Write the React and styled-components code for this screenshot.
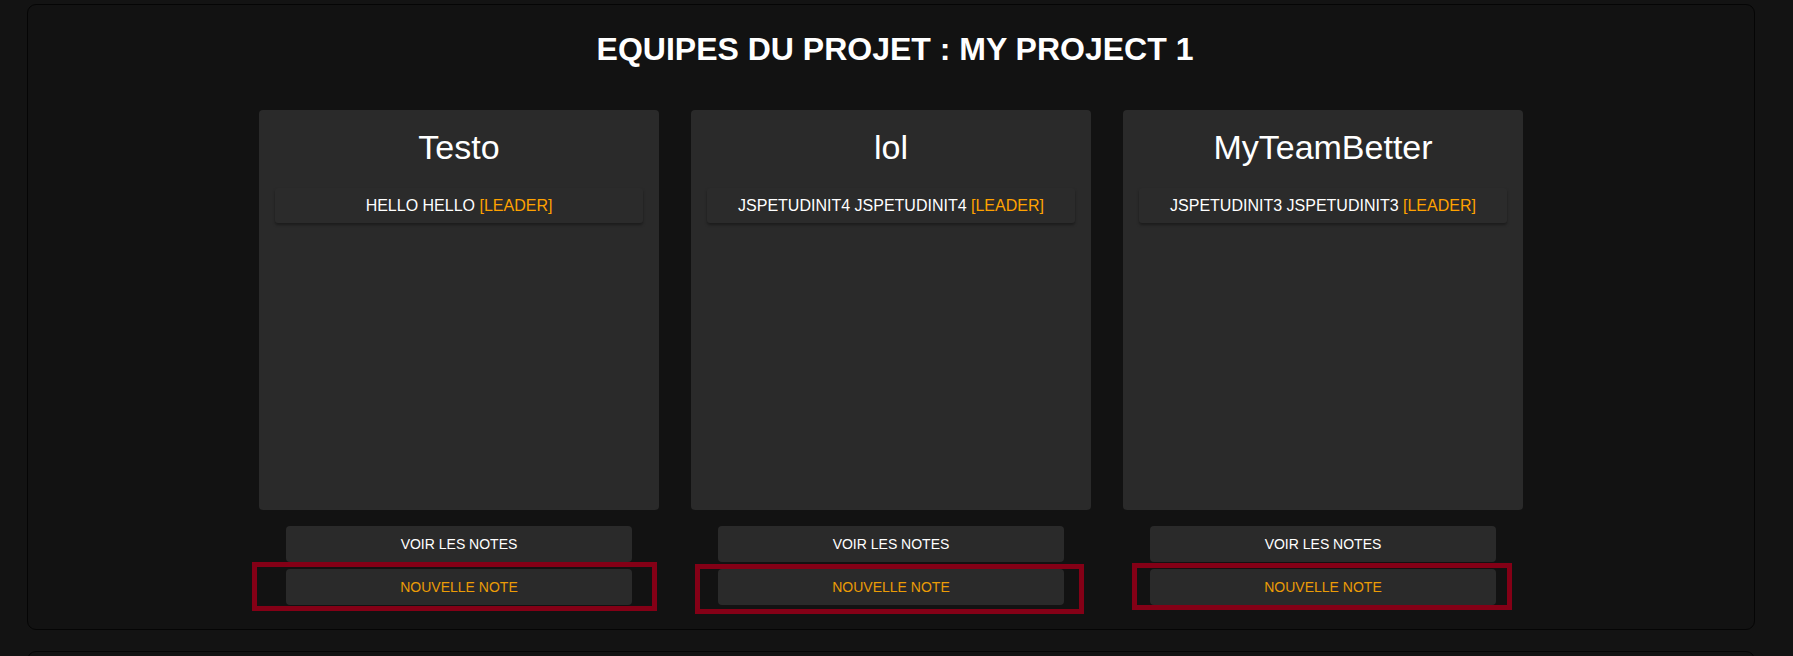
import React from 'react'
import styled, { createGlobalStyle } from 'styled-components'

const GlobalStyle = createGlobalStyle`
    html, body {
        margin: 0;
        padding: 0;
        background-color: #131313;
        font-family: 'Liberation Sans', Arial, sans-serif;
        overflow: hidden;
    }
`

const teams = [
    {
        name: 'Testo',
        members: [{ name: 'HELLO HELLO', leader: true }],
        frame: { top: 7, right: 25, bottom: 6, left: 34 },
    },
    {
        name: 'lol',
        members: [{ name: 'JSPETUDINIT4 JSPETUDINIT4', leader: true }],
        frame: { top: 5, right: 20, bottom: 9, left: 23 },
    },
    {
        name: 'MyTeamBetter',
        members: [{ name: 'JSPETUDINIT3 JSPETUDINIT3', leader: true }],
        frame: { top: 6, right: 16, bottom: 5, left: 18 },
    },
]

const App = () => {
    return (
        <>
            <GlobalStyle />
            <Page>
                <Panel>
                    <Title>EQUIPES DU PROJET : MY PROJECT 1</Title>
                    <TeamsRow>
                        {teams.map((team) => (
                            <TeamColumn key={team.name}>
                                <TeamCard>
                                    <TeamName>{team.name}</TeamName>
                                    {team.members.map((member) => (
                                        <Member key={member.name}>
                                            {member.name}
                                            {member.leader && <Leader> [LEADER]</Leader>}
                                        </Member>
                                    ))}
                                </TeamCard>
                                <Actions>
                                    <ActionBtn>VOIR LES NOTES</ActionBtn>
                                    <Highlighted>
                                        <ActionBtn $accent>NOUVELLE NOTE</ActionBtn>
                                        <Frame {...team.frame} />
                                    </Highlighted>
                                </Actions>
                            </TeamColumn>
                        ))}
                    </TeamsRow>
                </Panel>
                <NextPanel />
            </Page>
        </>
    )
}

export default App

const Page = styled.div`
    padding: 4px 38px 0 27px;
    display: flex;
    flex-direction: column;
    gap: 21px;
`

const Panel = styled.section`
    background-color: #121212;
    border: 1px solid #050505;
    border-radius: 9px;
    padding: 26px 0 24px;
    display: flex;
    flex-direction: column;
    align-items: center;
`

const NextPanel = styled(Panel)`
    height: 300px;
    padding: 0;
`

const Title = styled.h1`
    margin: 0;
    color: #ffffff;
    font-size: 32px;
    font-weight: bold;
    line-height: 37px;
    padding-left: 8px;
`

const TeamsRow = styled.div`
    margin-top: 42px;
    display: flex;
    gap: 32px;
    justify-content: center;
`

const TeamColumn = styled.div`
    width: 400px;
    display: flex;
    flex-direction: column;
    align-items: center;
    gap: 16px;
`

const TeamCard = styled.div`
    width: 100%;
    height: 400px;
    box-sizing: border-box;
    background-color: #2a2a2a;
    border-radius: 4px;
    padding: 18px 16px;
    display: flex;
    flex-direction: column;
`

const TeamName = styled.h2`
    margin: 0 0 21px;
    color: #ffffff;
    font-size: 34px;
    font-weight: normal;
    line-height: 39px;
    text-align: center;
`

const Member = styled.div`
    background-color: #2b2b2b;
    border-radius: 3px;
    box-shadow: 0 2px 3px rgba(0, 0, 0, 0.35);
    padding: 8px 10px;
    color: #ffffff;
    font-size: 16px;
    line-height: 19px;
    text-align: center;
`

const Leader = styled.span`
    color: #ffa200;
`

const Actions = styled.div`
    display: flex;
    flex-direction: column;
    gap: 7px;
    width: 346px;
`

const Highlighted = styled.div`
    position: relative;
`

const ActionBtn = styled.button`
    width: 100%;
    height: 36px;
    border: none;
    border-radius: 4px;
    background-color: #2a2a2a;
    color: ${(props) => (props.$accent ? '#eb9c06' : '#ffffff')};
    font-family: 'Liberation Sans', Arial, sans-serif;
    font-size: 14px;
    cursor: pointer;
`

const Frame = styled.div`
    position: absolute;
    top: ${(props) => -props.top}px;
    right: ${(props) => -props.right}px;
    bottom: ${(props) => -props.bottom}px;
    left: ${(props) => -props.left}px;
    border: 5px solid #840016;
    pointer-events: none;
`
